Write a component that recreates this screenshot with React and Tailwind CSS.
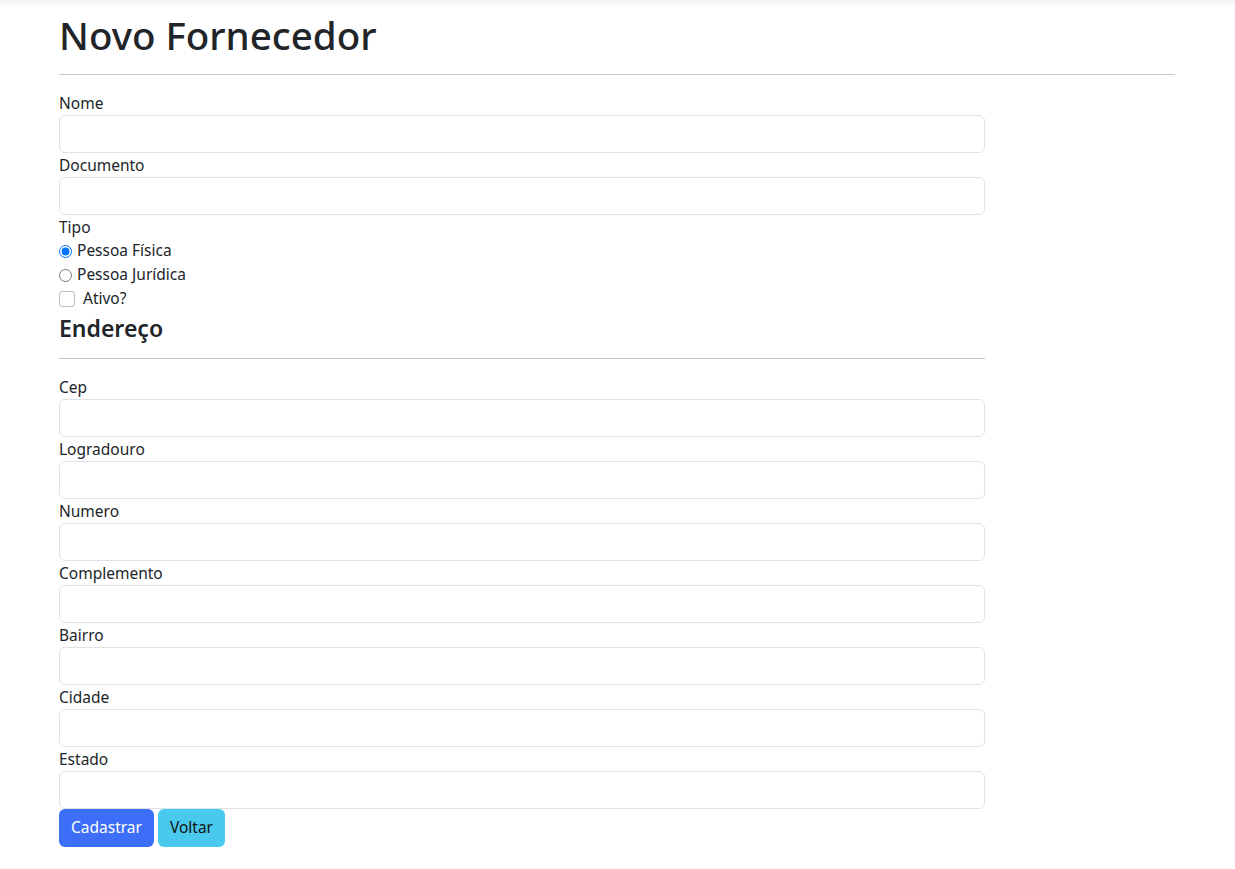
export default function App() {
  const fields = ['Cep', 'Logradouro', 'Numero', 'Complemento', 'Bairro', 'Cidade', 'Estado']

  const Field = ({ label }) => (
    <div>
      <label className="block leading-6">{label}</label>
      <input type="text" className="block h-[38px] w-full rounded-md border border-[#dee2e6] bg-white px-3" />
    </div>
  )

  return (
    <div className="relative min-h-screen bg-white font-['Noto_Sans',sans-serif] text-[15.5px] text-[#212529]">
      <div className="absolute inset-x-0 top-0 h-[8px] bg-gradient-to-b from-black/[0.04] to-transparent" />
      <div className="ml-[47px] w-[1140px] px-3">
        <h1 className="pt-[11px] mb-[15px] text-[38.5px] font-medium leading-[48px]">Novo Fornecedor</h1>
        <hr className="mb-4 border-t border-[#c8c9ca]" />

        <form className="w-[926px]">
          <Field label="Nome" />
          <Field label="Documento" />

          <label className="block leading-6">Tipo</label>
          <div className="flex h-6 items-center">
            <input type="radio" name="tipo" defaultChecked className="h-[13px] w-[13px]" />
            <span className="ml-[5px]">Pessoa Física</span>
          </div>
          <div className="flex h-6 items-center">
            <input type="radio" name="tipo" className="h-[13px] w-[13px]" />
            <span className="ml-[5px]">Pessoa Jurídica</span>
          </div>
          <div className="flex h-6 items-center">
            <input type="checkbox" className="h-4 w-4 appearance-none rounded border border-black/25 bg-white" />
            <span className="ml-2">Ativo?</span>
          </div>

          <h4 className="mt-[3px] text-[23px] font-semibold leading-[29px]">Endereço</h4>
          <hr className="mt-[15px] mb-4 border-t border-[#c8c9ca]" />

          {fields.map((f) => (
            <Field key={f} label={f} />
          ))}

          <div className="flex gap-1">
            <button type="button" className="h-[38px] rounded-md bg-[#3d6ef8] px-3 text-white">Cadastrar</button>
            <button type="button" className="h-[38px] rounded-md bg-[#4ac9ee] px-3 text-[#111]">Voltar</button>
          </div>
        </form>
      </div>
    </div>
  )
}
